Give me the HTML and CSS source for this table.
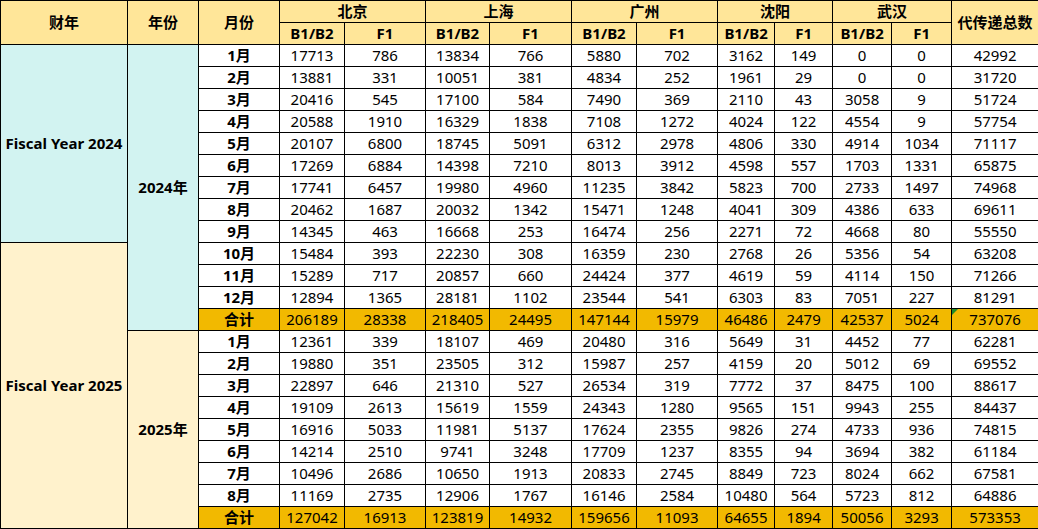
FILE: index.html
```html
<!DOCTYPE html>
<html lang="zh">
<head>
<meta charset="utf-8">
<title>代传递统计</title>
<link rel="stylesheet" href="styles.css">
</head>
<body>
<table class="sheet">
<colgroup>
<col style="width:127px"><col style="width:71px"><col style="width:81px">
<col style="width:65px"><col style="width:81px">
<col style="width:64px"><col style="width:82px">
<col style="width:65px"><col style="width:81px">
<col style="width:57px"><col style="width:58px">
<col style="width:59px"><col style="width:60px">
<col style="width:87px">
</colgroup>
<thead>
<tr class="hd">
<th rowspan="2">财年</th><th rowspan="2">年份</th><th rowspan="2">月份</th>
<th colspan="2">北京</th><th colspan="2">上海</th><th colspan="2">广州</th><th colspan="2">沈阳</th><th colspan="2">武汉</th>
<th rowspan="2">代传递总数</th>
</tr>
<tr class="hd">
<th>B1/B2</th><th>F1</th><th>B1/B2</th><th>F1</th><th>B1/B2</th><th>F1</th><th>B1/B2</th><th>F1</th><th>B1/B2</th><th>F1</th>
</tr>
</thead>
<tbody>
<tr><th rowspan="9" class="fy teal">Fiscal Year 2024</th><th rowspan="13" class="yr teal">2024年</th><th class="m">1月</th><td>17713</td><td>786</td><td>13834</td><td>766</td><td>5880</td><td>702</td><td>3162</td><td>149</td><td>0</td><td>0</td><td>42992</td></tr>
<tr><th class="m">2月</th><td>13881</td><td>331</td><td>10051</td><td>381</td><td>4834</td><td>252</td><td>1961</td><td>29</td><td>0</td><td>0</td><td>31720</td></tr>
<tr><th class="m">3月</th><td>20416</td><td>545</td><td>17100</td><td>584</td><td>7490</td><td>369</td><td>2110</td><td>43</td><td>3058</td><td>9</td><td>51724</td></tr>
<tr><th class="m">4月</th><td>20588</td><td>1910</td><td>16329</td><td>1838</td><td>7108</td><td>1272</td><td>4024</td><td>122</td><td>4554</td><td>9</td><td>57754</td></tr>
<tr><th class="m">5月</th><td>20107</td><td>6800</td><td>18745</td><td>5091</td><td>6312</td><td>2978</td><td>4806</td><td>330</td><td>4914</td><td>1034</td><td>71117</td></tr>
<tr><th class="m">6月</th><td>17269</td><td>6884</td><td>14398</td><td>7210</td><td>8013</td><td>3912</td><td>4598</td><td>557</td><td>1703</td><td>1331</td><td>65875</td></tr>
<tr><th class="m">7月</th><td>17741</td><td>6457</td><td>19980</td><td>4960</td><td>11235</td><td>3842</td><td>5823</td><td>700</td><td>2733</td><td>1497</td><td>74968</td></tr>
<tr><th class="m">8月</th><td>20462</td><td>1687</td><td>20032</td><td>1342</td><td>15471</td><td>1248</td><td>4041</td><td>309</td><td>4386</td><td>633</td><td>69611</td></tr>
<tr><th class="m">9月</th><td>14345</td><td>463</td><td>16668</td><td>253</td><td>16474</td><td>256</td><td>2271</td><td>72</td><td>4668</td><td>80</td><td>55550</td></tr>
<tr><th rowspan="13" class="fy cream">Fiscal Year 2025</th><th class="m">10月</th><td>15484</td><td>393</td><td>22230</td><td>308</td><td>16359</td><td>230</td><td>2768</td><td>26</td><td>5356</td><td>54</td><td>63208</td></tr>
<tr><th class="m">11月</th><td>15289</td><td>717</td><td>20857</td><td>660</td><td>24424</td><td>377</td><td>4619</td><td>59</td><td>4114</td><td>150</td><td>71266</td></tr>
<tr><th class="m">12月</th><td>12894</td><td>1365</td><td>28181</td><td>1102</td><td>23544</td><td>541</td><td>6303</td><td>83</td><td>7051</td><td>227</td><td>81291</td></tr>
<tr class="sum"><th class="m">合计</th><td>206189</td><td>28338</td><td>218405</td><td>24495</td><td>147144</td><td>15979</td><td>46486</td><td>2479</td><td>42537</td><td>5024</td><td class="flag">737076</td></tr>
<tr><th rowspan="9" class="yr cream">2025年</th><th class="m">1月</th><td>12361</td><td>339</td><td>18107</td><td>469</td><td>20480</td><td>316</td><td>5649</td><td>31</td><td>4452</td><td>77</td><td>62281</td></tr>
<tr><th class="m">2月</th><td>19880</td><td>351</td><td>23505</td><td>312</td><td>15987</td><td>257</td><td>4159</td><td>20</td><td>5012</td><td>69</td><td>69552</td></tr>
<tr><th class="m">3月</th><td>22897</td><td>646</td><td>21310</td><td>527</td><td>26534</td><td>319</td><td>7772</td><td>37</td><td>8475</td><td>100</td><td>88617</td></tr>
<tr><th class="m">4月</th><td>19109</td><td>2613</td><td>15619</td><td>1559</td><td>24343</td><td>1280</td><td>9565</td><td>151</td><td>9943</td><td>255</td><td>84437</td></tr>
<tr><th class="m">5月</th><td>16916</td><td>5033</td><td>11981</td><td>5137</td><td>17624</td><td>2355</td><td>9826</td><td>274</td><td>4733</td><td>936</td><td>74815</td></tr>
<tr><th class="m">6月</th><td>14214</td><td>2510</td><td>9741</td><td>3248</td><td>17709</td><td>1237</td><td>8355</td><td>94</td><td>3694</td><td>382</td><td>61184</td></tr>
<tr><th class="m">7月</th><td>10496</td><td>2686</td><td>10650</td><td>1913</td><td>20833</td><td>2745</td><td>8849</td><td>723</td><td>8024</td><td>662</td><td>67581</td></tr>
<tr><th class="m">8月</th><td>11169</td><td>2735</td><td>12906</td><td>1767</td><td>16146</td><td>2584</td><td>10480</td><td>564</td><td>5723</td><td>812</td><td>64886</td></tr>
<tr class="sum"><th class="m">合计</th><td>127042</td><td>16913</td><td>123819</td><td>14932</td><td>159656</td><td>11093</td><td>64655</td><td>1894</td><td>50056</td><td>3293</td><td>573353</td></tr>
</tbody>
</table>
</body>
</html>
```
FILE: styles.css
```css
html, body {
  margin: 0;
  padding: 0;
  background: #ffffff;
}
.sheet {
  border-collapse: collapse;
  table-layout: fixed;
  width: 1038px;
  font-family: "Noto Sans", "Noto Sans CJK SC", sans-serif;
  font-size: 15px;
  color: #000;
}
.sheet th, .sheet td {
  border: 1px solid #000;
  padding: 0;
  height: 21px;
  line-height: 15px;
  text-align: center;
  white-space: nowrap;
  overflow: hidden;
}
.sheet th {
  font-family: "Noto Sans", "Noto Sans CJK SC", sans-serif;
  font-weight: 700;
}
.hd th {
  background: #ffe699;
}
.teal {
  background: #d2f3f1;
}
.cream {
  background: #fff2cc;
}
.sum th, .sum td {
  background: #f2b900;
}
.flag {
  position: relative;
}
.flag::before {
  content: "";
  position: absolute;
  left: 0;
  top: 0;
  border-top: 6px solid #1e8c2a;
  border-right: 6px solid transparent;
}
```
